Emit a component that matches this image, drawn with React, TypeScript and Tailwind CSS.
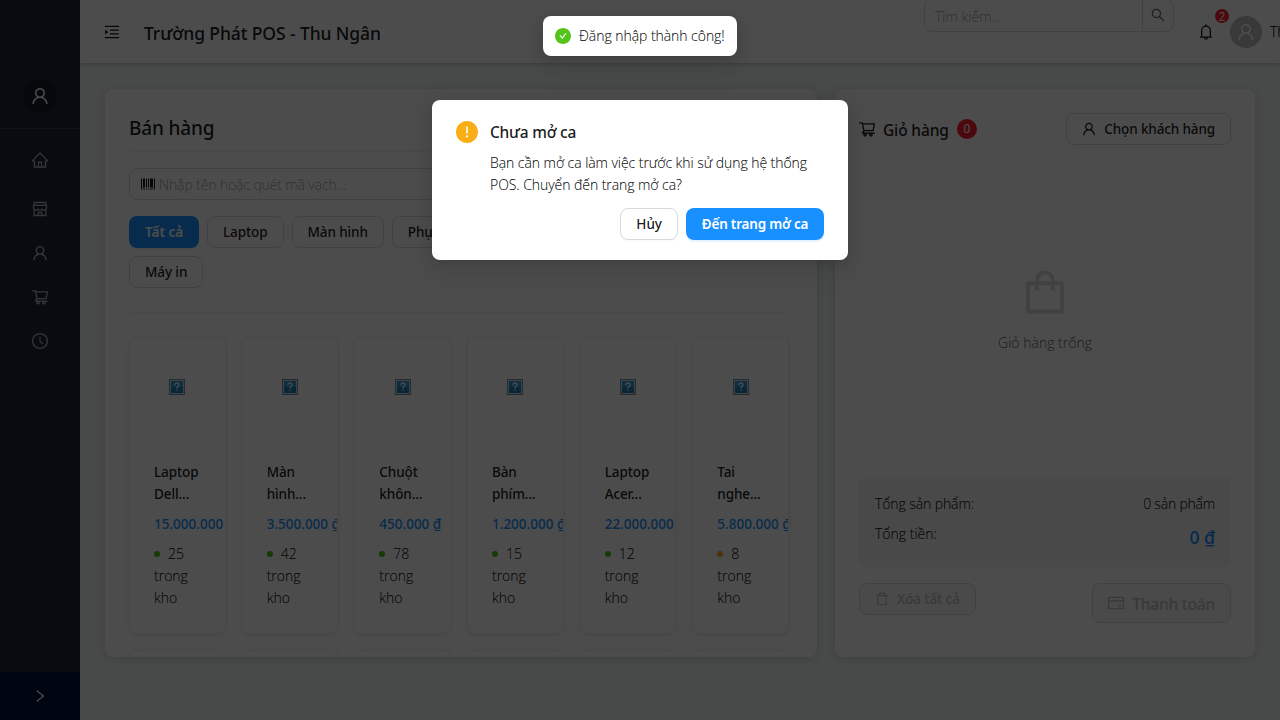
import React from "react";
import type { IconType } from "react-icons";
import {
  AiOutlineBarcode,
  AiOutlineBell,
  AiOutlineClockCircle,
  AiOutlineCreditCard,
  AiOutlineDelete,
  AiOutlineHome,
  AiOutlineMenuUnfold,
  AiOutlineRight,
  AiOutlineSearch,
  AiOutlineShop,
  AiOutlineShopping,
  AiOutlineShoppingCart,
  AiOutlineUser,
  AiFillCheckCircle,
  AiFillExclamationCircle,
} from "react-icons/ai";

type Product = { lines: [string, string]; price: string; stock: number; low?: boolean };

const products: Product[] = [
  { lines: ["Laptop", "Dell..."], price: "15.000.000", stock: 25 },
  { lines: ["Màn", "hình..."], price: "3.500.000 ₫", stock: 42 },
  { lines: ["Chuột", "khôn..."], price: "450.000 ₫", stock: 78 },
  { lines: ["Bàn", "phím..."], price: "1.200.000 ₫", stock: 15 },
  { lines: ["Laptop", "Acer..."], price: "22.000.000", stock: 12 },
  { lines: ["Tai", "nghe..."], price: "5.800.000 ₫", stock: 8, low: true },
];

/* Ant Design glyphs are trimmed to their 896-unit drawing area. */
function Icon({ of: Glyph, size, className }: { of: IconType; size: number; className?: string }) {
  return <Glyph size={size} viewBox="64 64 896 896" className={className} />;
}

function Sidebar() {
  return (
    <aside className="flex w-20 shrink-0 flex-col bg-[#1c2838] text-white/65">
      <div className="flex h-[129px] items-end justify-center border-b border-white/10 pb-4">
        <span className="flex size-8 items-center justify-center rounded-full bg-[#141c25] text-white">
          <Icon of={AiOutlineUser} size={18} />
        </span>
      </div>
      <div className="flex h-[57px] items-center justify-center border-b border-white/5 pt-1.5">
        <Icon of={AiOutlineHome} size={16} />
      </div>
      <nav className="flex flex-1 flex-col items-center pt-px">
        <div className="flex h-11 items-center"><Icon of={AiOutlineShop} size={16} /></div>
        <div className="flex h-11 items-center"><Icon of={AiOutlineUser} size={16} /></div>
        <div className="flex h-11 items-center"><Icon of={AiOutlineShoppingCart} size={16} /></div>
        <div className="flex h-11 items-center"><Icon of={AiOutlineClockCircle} size={16} /></div>
      </nav>
      <div className="flex h-12 items-center justify-center bg-[#00163a] text-white">
        <Icon of={AiOutlineRight} size={14} />
      </div>
    </aside>
  );
}

function Header() {
  return (
    <header className="z-[1] flex h-[63px] shrink-0 bg-white pl-6 shadow-[0_1px_4px_rgba(0,21,41,0.2)]">
      <Icon of={AiOutlineMenuUnfold} size={16} className="mt-6 shrink-0" />
      <h1 className="ml-6 w-[780px] shrink-0 whitespace-nowrap font-['Noto_Sans'] text-[17.5px] font-medium leading-[66px] tracking-[-0.1px]">
        Trường Phát POS - Thu Ngân
      </h1>
      <div className="-mt-px flex h-[33px] w-[250px] shrink-0 rounded-lg border border-[#d9d9d9]">
        <span className="flex-1 pl-2.5 text-sm font-light leading-[34px] text-black/35 [-webkit-text-stroke:0.15px]">Tìm kiếm...</span>
        <span className="flex w-[31px] items-center justify-center border-l border-[#d9d9d9] pb-0.5 text-black/60">
          <Icon of={AiOutlineSearch} size={14} />
        </span>
      </div>
      <div className="relative ml-6 mt-6 size-4 shrink-0">
        <Icon of={AiOutlineBell} size={16} />
        <span className="absolute -top-[15px] left-[17px] size-3.5 rounded-full bg-[#ff1f2d] text-center text-xs leading-[15px] text-white">2</span>
      </div>
      <span className="ml-4 mt-4 flex size-8 shrink-0 items-center justify-center rounded-full bg-[#bfbfbf] text-white">
        <Icon of={AiOutlineUser} size={18} />
      </span>
      <span className="ml-2 whitespace-nowrap text-sm font-light leading-[64px] [-webkit-text-stroke:0.25px]">Thu Ngân</span>
    </header>
  );
}

function Category({ label, active }: { label: string; active?: boolean }) {
  return (
    <button
      className={
        active
          ? "h-8 w-[70px] whitespace-nowrap rounded-lg bg-[#1890ff] text-center font-['Noto_Sans'] text-[13.5px] font-semibold leading-[31px] text-white shadow-[0_2px_0_rgba(5,145,255,0.1)]"
          : "h-8 whitespace-nowrap rounded-lg border border-[#d9d9d9] px-[15px] font-['Noto_Sans'] text-[13.5px] font-medium leading-[29px] tracking-[-0.1px] shadow-[0_2px_0_rgba(0,0,0,0.02)]"
      }
    >
      {label}
    </button>
  );
}

function Placeholder() {
  return (
    <svg width="16" height="16" viewBox="0 0 16 16" fill="none">
      <rect x="0.5" y="0.5" width="15" height="15" fill="#d5dfe6" stroke="#7794ab" />
      <rect x="2" y="2" width="12" height="12" fill="#329ddb" />
      <path d="M2 8h12v6H2z" fill="#1e7fb8" />
      <path d="M6 6.2V5.2L7 4.2h2l1 1v1.3L8 8.3v1.4M8 10.8V12" stroke="#ffffff" strokeWidth="1.2" />
    </svg>
  );
}

function ProductCard({ product }: { product: Product }) {
  return (
    <article className="h-[297px] overflow-hidden rounded-lg border border-[#f0f0f0] bg-white shadow-[0_1px_4px_rgba(0,0,0,0.1)]">
      <div className="flex h-[98px] items-center justify-center">
        <Placeholder />
      </div>
      <div className="px-6 pt-[25px] text-sm leading-[22px]">
        <div className="font-['Noto_Sans'] text-[13.5px] font-medium tracking-[-0.1px]">
          {product.lines.map((l) => <div key={l}>{l}</div>)}
        </div>
        <div className="mt-2 whitespace-nowrap font-['Noto_Sans'] text-[13.5px] font-medium text-[#1890ff]">{product.price}</div>
        <div className="mt-2 font-light text-black/90 [-webkit-text-stroke:0.15px]">
          <span className={product.low ? "mr-2 inline-block size-1.5 rounded-full bg-[#faad14] align-[2px]" : "mr-2 inline-block size-1.5 rounded-full bg-[#52c41a] align-[2px]"} />
          {product.stock}
          <div>trong</div>
          <div>kho</div>
        </div>
      </div>
    </article>
  );
}

function SalesPanel() {
  return (
    <section className="flex h-[568px] w-[712px] flex-col overflow-hidden rounded-lg bg-white pl-6 pr-[27px] pt-6">
      <h2 className="h-[39px] shrink-0 border-b border-[#f0f0f0] font-['Noto_Sans'] text-[19px] font-medium leading-[30px] tracking-[-0.15px]">Bán hàng</h2>
      <div className="mt-4 flex h-8 shrink-0 items-center rounded-lg border border-[#d9d9d9] pl-[11px]">
        <Icon of={AiOutlineBarcode} size={14} />
        <span className="ml-1 text-sm font-light leading-[33px] tracking-[-0.13px] text-black/35 [-webkit-text-stroke:0.15px]">Nhập tên hoặc quét mã vạch...</span>
      </div>
      <div className="mt-4 flex shrink-0 flex-wrap gap-2">
        <Category label="Tất cả" active />
        <Category label="Laptop" />
        <Category label="Màn hình" />
        <Category label="Phụ kiện" />
        <Category label="Linh kiện máy tính" />
        <Category label="Thiết bị mạng" />
        <Category label="Máy in" />
      </div>
      <hr className="my-6 shrink-0 border-[#f0f0f0]" />
      <div className="grid w-[660px] shrink-0 grid-cols-6 gap-4">
        {products.map((p) => <ProductCard key={p.price} product={p} />)}
        {products.map((p) => (
          <div key={p.price} className="h-10 rounded-lg border border-[#f0f0f0] bg-white shadow-[0_1px_4px_rgba(0,0,0,0.1)]" />
        ))}
      </div>
    </section>
  );
}

function CartPanel() {
  return (
    <section className="flex h-[568px] w-[420px] flex-col rounded-lg bg-white p-6 shadow-[0_2px_8px_rgba(0,21,41,0.12)]">
      <div className="flex h-8 items-center">
        <Icon of={AiOutlineShoppingCart} size={16} />
        <span className="ml-2 w-[66px] whitespace-nowrap pt-0.5 font-['Noto_Sans'] text-[15.5px] font-medium leading-[34px] tracking-[-0.15px]">Giỏ hàng</span>
        <span className="ml-2 size-5 rounded-full bg-[#ff1f2d] text-center text-xs leading-5 text-white [-webkit-text-stroke:0.2px]">0</span>
        <button className="ml-auto flex h-8 items-center gap-2 rounded-lg border border-[#d9d9d9] px-[15px] font-['Noto_Sans'] text-[13.5px] font-medium tracking-[-0.13px]">
          <Icon of={AiOutlineUser} size={14} />
          Chọn khách hàng
        </button>
      </div>
      <div className="flex flex-1 flex-col items-center pt-[123px]">
        <Icon of={AiOutlineShopping} size={48} className="text-[#d9d9d9]" />
        <span className="mt-[17px] text-sm font-light text-black/60 [-webkit-text-stroke:0.1px]">Giỏ hàng trống</span>
      </div>
      <div className="h-[90px] rounded-md bg-[#f3f3f3] p-4 text-sm font-light leading-[22px] tracking-[-0.1px] [-webkit-text-stroke:0.15px]">
        <div className="flex justify-between">
          <span>Tổng sản phẩm:</span>
          <span className="tracking-[-0.2px]">0 sản phẩm</span>
        </div>
        <div className="mt-2 flex justify-between">
          <span className="tracking-normal">Tổng tiền:</span>
          <span className="font-['Noto_Sans'] text-[17.5px] font-medium leading-7 tracking-normal text-[#1890ff]">0 ₫</span>
        </div>
      </div>
      <div className="mb-[10px] mt-4 flex items-start justify-between font-['Noto_Sans'] font-medium text-[#bfbfbf]">
        <button className="flex h-8 items-center gap-2 rounded-lg border border-[#d9d9d9] bg-black/[0.03] px-[15px] text-[13.5px] tracking-[-0.1px]">
          <Icon of={AiOutlineDelete} size={14} />
          Xóa tất cả
        </button>
        <button className="flex h-10 items-center gap-2 rounded-lg border border-[#d9d9d9] bg-black/[0.03] px-[15px] text-[15.5px] leading-[42px] tracking-[-0.2px]">
          <Icon of={AiOutlineCreditCard} size={16} />
          <span className="pt-0.5">Thanh toán</span>
        </button>
      </div>
    </section>
  );
}

export default function App() {
  return (
    <div className="relative flex h-[720px] w-[1280px] overflow-hidden bg-[#f0f5f3] font-['Open_Sans','Noto_Sans',sans-serif] text-black/90">
      <Sidebar />
      <div className="flex w-[1200px] shrink-0 flex-col">
        <Header />
        <main className="flex gap-[18px] pl-[25px] pt-[26px]">
          <div className="rounded-lg shadow-[0_2px_8px_rgba(0,21,41,0.12)]"><SalesPanel /></div>
          <CartPanel />
        </main>
      </div>

      <div className="absolute inset-0 z-10 bg-black/70" />

      <div className="absolute left-[432px] top-[100px] z-20 h-40 w-[416px] rounded-lg bg-white px-6 py-5 shadow-[0_6px_16px_0_rgba(0,0,0,0.08),0_3px_6px_-4px_rgba(0,0,0,0.12),0_9px_28px_8px_rgba(0,0,0,0.05)]">
        <div className="flex">
          <Icon of={AiFillExclamationCircle} size={22} className="mt-px shrink-0 text-[#faad14]" />
          <div className="ml-3 flex-1">
            <h3 className="font-['Noto_Sans'] text-[15.5px] font-medium leading-6 tracking-[-0.22px]">Chưa mở ca</h3>
            <p className="mt-2 whitespace-nowrap text-sm font-light leading-[22px] tracking-[-0.06px] text-black/90 [-webkit-text-stroke:0.15px]">
              Bạn cần mở ca làm việc trước khi sử dụng hệ thống
              <br />
              POS. Chuyển đến trang mở ca?
            </p>
          </div>
        </div>
        <div className="mt-3 flex justify-end gap-2 font-['Noto_Sans'] text-[13.5px]">
          <button className="h-8 rounded-lg border border-[#d9d9d9] px-[15px] font-medium leading-[29px] shadow-[0_2px_0_rgba(0,0,0,0.02)]">Hủy</button>
          <button className="h-8 w-[138px] whitespace-nowrap rounded-lg bg-[#1890ff] text-center font-semibold tracking-[-0.2px] text-white shadow-[0_2px_0_rgba(5,145,255,0.1)]">Đến trang mở ca</button>
        </div>
      </div>

      <div className="absolute left-[543px] top-4 z-30 flex h-10 w-[194px] items-center rounded-lg bg-white pl-3 shadow-[0_6px_16px_0_rgba(0,0,0,0.08),0_3px_6px_-4px_rgba(0,0,0,0.12),0_9px_28px_8px_rgba(0,0,0,0.05)]">
        <Icon of={AiFillCheckCircle} size={16} className="text-[#52c41a]" />
        <span className="ml-2 whitespace-nowrap text-sm font-light leading-[22px] tracking-[-0.05px] text-black/90 [-webkit-text-stroke:0.15px]">Đăng nhập thành công!</span>
      </div>
    </div>
  );
}
